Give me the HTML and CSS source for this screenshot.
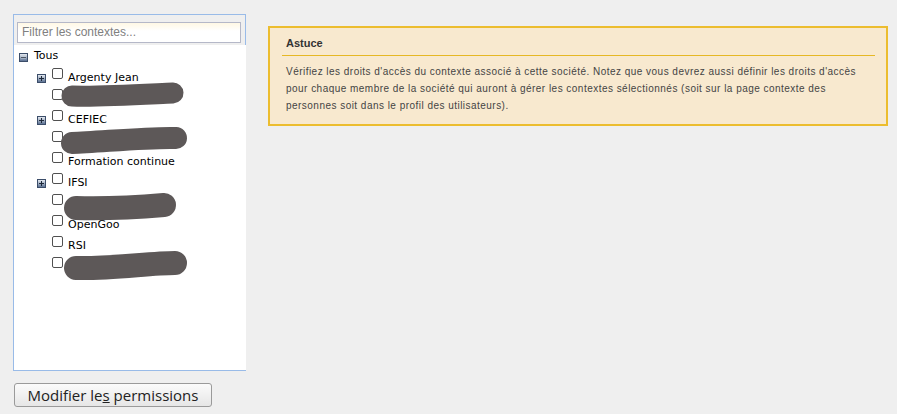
FILE: index.html
```html
<!DOCTYPE html>
<html lang="fr">
<head>
    <meta charset="UTF-8">
    <title>Permissions des contextes</title>
    <link rel="stylesheet" href="styles.css">
</head>
<body>

<div class="page">
    <div class="left-col">
        <div class="tree-panel">
            <div class="tree-toolbar">
                <input type="text" class="tree-filter" placeholder="Filtrer les contextes...">
            </div>
            <div class="tree-body">
                <div class="tree-row root">
                    <svg class="tree-icon" width="9" height="9" viewBox="0 0 9 9">
                        <defs>
                            <linearGradient id="g1" x1="0" y1="0" x2="0" y2="1">
                                <stop offset="0" stop-color="#eef2f7"/>
                                <stop offset="1" stop-color="#52698c"/>
                            </linearGradient>
                        </defs>
                        <rect x="0.5" y="0.5" width="8" height="8" fill="url(#g1)" stroke="#3b4d69"/>
                        <path d="M2 4.5h5" stroke="#ffffff" stroke-width="1.4"/>
                        <path d="M2 4.5h5" stroke="#1c2839" stroke-width="0.8"/>
                    </svg>
                    <span class="label">Tous</span>
                </div>
                <div class="tree-children">
                    <div class="tree-row">
                        <svg class="tree-icon" width="9" height="9" viewBox="0 0 9 9">
                            <rect x="0.5" y="0.5" width="8" height="8" fill="url(#g1)" stroke="#3b4d69"/>
                            <path d="M2 4.5h5M4.5 2v5" stroke="#1c2839" stroke-width="1"/>
                        </svg>
                        <input type="checkbox" class="check">
                        <span class="label">Argenty Jean</span>
                    </div>
                    <div class="tree-row">
                        <span class="tree-spacer"></span>
                        <input type="checkbox" class="check">
                        <svg class="redact" width="180" height="21"><path d="M58 8 C 86 9, 136 6, 159 5"/></svg>
                    </div>
                    <div class="tree-row">
                        <svg class="tree-icon" width="9" height="9" viewBox="0 0 9 9">
                            <rect x="0.5" y="0.5" width="8" height="8" fill="url(#g1)" stroke="#3b4d69"/>
                            <path d="M2 4.5h5M4.5 2v5" stroke="#1c2839" stroke-width="1"/>
                        </svg>
                        <input type="checkbox" class="check">
                        <span class="label">CEFIEC</span>
                    </div>
                    <div class="tree-row">
                        <span class="tree-spacer"></span>
                        <input type="checkbox" class="check">
                        <svg class="redact thick" width="180" height="21"><path d="M58 13 C 86 12, 136 7, 162 8"/></svg>
                    </div>
                    <div class="tree-row">
                        <span class="tree-spacer"></span>
                        <input type="checkbox" class="check">
                        <span class="label">Formation continue</span>
                    </div>
                    <div class="tree-row">
                        <svg class="tree-icon" width="9" height="9" viewBox="0 0 9 9">
                            <rect x="0.5" y="0.5" width="8" height="8" fill="url(#g1)" stroke="#3b4d69"/>
                            <path d="M2 4.5h5M4.5 2v5" stroke="#1c2839" stroke-width="1"/>
                        </svg>
                        <input type="checkbox" class="check">
                        <span class="label">IFSI</span>
                    </div>
                    <div class="tree-row">
                        <span class="tree-spacer"></span>
                        <input type="checkbox" class="check">
                        <svg class="redact wide" width="180" height="21"><path d="M62 15 C 96 16, 126 14, 150 12"/></svg>
                    </div>
                    <div class="tree-row">
                        <span class="tree-spacer"></span>
                        <input type="checkbox" class="check">
                        <span class="label">OpenGoo</span>
                    </div>
                    <div class="tree-row">
                        <span class="tree-spacer"></span>
                        <input type="checkbox" class="check">
                        <span class="label">RSI</span>
                    </div>
                    <div class="tree-row">
                        <span class="tree-spacer"></span>
                        <input type="checkbox" class="check">
                        <svg class="redact wide" width="180" height="21"><path d="M62 12 C 96 13, 136 7, 161 7"/></svg>
                    </div>
                </div>
            </div>
        </div>
        <button class="btn-permissions">Modifier le<u>s</u> permissions</button>
    </div>

    <div class="tip-box">
        <div class="tip-title">Astuce</div>
        <p class="tip-text">Vérifiez les droits d'accès du contexte associé à cette société. Notez que vous devrez aussi définir les droits d'accès pour chaque membre de la société qui auront à gérer les contextes sélectionnés (soit sur la page contexte des personnes soit dans le profil des utilisateurs).</p>
    </div>
</div>

</body>
</html>
```

FILE: styles.css
```css
body {
    margin: 0;
    background-color: #efefef;
    font-family: "DejaVu Sans", sans-serif;
    color: #000;
}

.page {
    display: flex;
    align-items: flex-start;
    gap: 22px;
    padding: 14px 9px 0 13px;
}

/* colonne de gauche : arbre + bouton */
.left-col {
    display: flex;
    flex-direction: column;
    align-items: flex-start;
    width: 233px;
    flex-shrink: 0;
}
.tree-panel {
    width: 232px;
    height: 355px;
    border: 1px solid #99bbe8;
    border-right: none;
    display: flex;
    flex-direction: column;
}
.tree-toolbar {
    padding: 6px 0 2px 3px;
    border-right: 1px solid #99bbe8;
    width: 228px;
}
.tree-filter {
    box-sizing: border-box;
    width: 224px;
    height: 21px;
    margin: 0;
    padding: 0 4px;
    border: 1px solid #b5b8c8;
    background: linear-gradient(#fff8e4, #ffffff 8px);
    font-family: "Liberation Sans", Arial, sans-serif;
    font-size: 12px;
    outline: none;
}
.tree-filter::placeholder {
    color: #808080;
}
.tree-body {
    flex: 1;
    background-color: #ffffff;
}

.tree-row {
    position: relative;
    display: flex;
    align-items: flex-start;
    height: 21px;
    padding-left: 23px;
    white-space: nowrap;
}
.tree-row.root {
    padding-left: 5px;
}
.tree-children {
    margin-top: 1px;
}
.label {
    font-size: 11px;
    line-height: 21px;
}
.tree-icon {
    flex-shrink: 0;
    margin: 7px 6px 0 0;
}
.tree-row.root .tree-icon {
    margin-top: 8px;
}
.tree-spacer {
    width: 9px;
    margin-right: 6px;
    flex-shrink: 0;
}
.check {
    appearance: none;
    -webkit-appearance: none;
    box-sizing: border-box;
    flex-shrink: 0;
    width: 11px;
    height: 11px;
    margin: 1px 5px 0 0;
    border: 1px solid #505050;
    border-radius: 2px;
    background: #ffffff;
}

/* zones masquées */
.redact {
    position: absolute;
    left: 0;
    top: 0;
    overflow: visible;
}
.redact path {
    fill: none;
    stroke: #5d5858;
    stroke-width: 21;
    stroke-linecap: round;
}
.redact.thick path {
    stroke-width: 22;
}
.redact.wide path {
    stroke-width: 24;
}

.btn-permissions {
    margin-top: 12px;
    margin-left: 1px;
    width: 198px;
    height: 24px;
    padding: 0;
    border: 1px solid #9a9a9a;
    border-radius: 3px;
    background: linear-gradient(#fbfbfb, #e6e6e6);
    font-family: "Open Sans", sans-serif;
    font-size: 15px;
    color: #222;
}
.btn-permissions u {
    text-decoration-thickness: 1px;
}

/* encadré astuce */
.tip-box {
    flex: 1;
    margin-top: 12px;
    padding: 0 11px 10px 12px;
    border: 2px solid #ecbd2f;
    background-color: #f8e9cf;
    font-family: "Liberation Sans", Arial, sans-serif;
    color: #333;
}
.tip-title {
    padding: 9px 0 0 4px;
    height: 18px;
    font-size: 11px;
    font-weight: bold;
    border-bottom: 1px solid #e6b825;
}
.tip-text {
    margin: 7px 0 0;
    padding-left: 4px;
    font-size: 10px;
    letter-spacing: 0.47px;
    line-height: 17px;
    color: #444;
}
```
